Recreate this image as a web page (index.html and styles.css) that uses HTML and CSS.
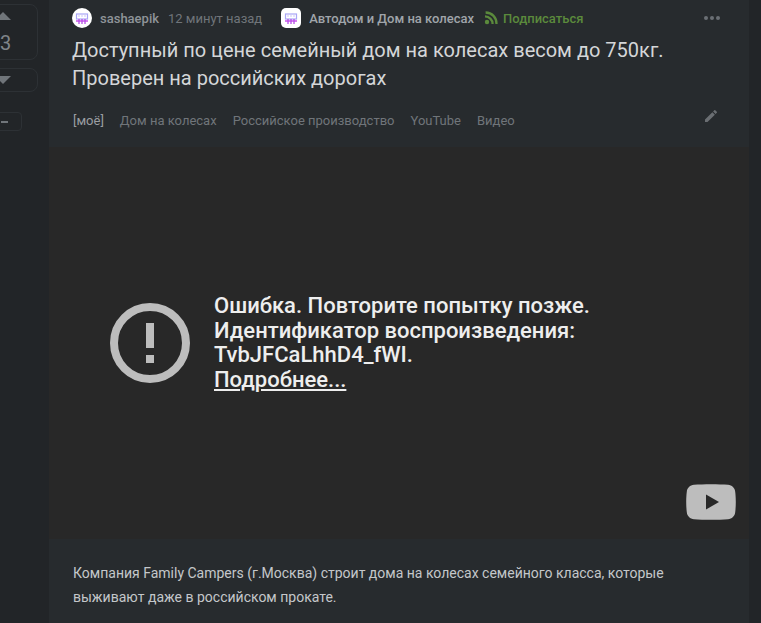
FILE: index.html
```html
<!DOCTYPE html>
<html lang="en">
<head>
    <meta charset="UTF-8">
    <title>Доступный по цене семейный дом на колесах</title>
    <link rel="stylesheet" href="styles.css">
</head>
<body>
    <div class="layout">
        <aside class="rating">
            <div class="vote-box vote-top">
                <span class="arrow arrow-up"></span>
                <span class="score">3</span>
            </div>
            <div class="vote-box vote-down">
                <span class="arrow arrow-down"></span>
            </div>
            <div class="vote-box vote-hide">
                <span class="dash"></span>
            </div>
        </aside>

        <main class="story">
            <div class="meta">
                <span class="avatar round">
                    <svg viewBox="0 0 20 20" width="20" height="20"><rect x="4.500" y="6" width="11" height="5" fill="none" stroke="#a9a6f5" stroke-width="1.200"/><path d="M6 8h2M9 8h2M12 8h2" stroke="#c9c6fa" stroke-width="1.200"/><path d="M4 12h12v2H4z" fill="#d77cf0"/><path d="M7 11v5M10 11v5M13 11v5" stroke="#b44ee8" stroke-width="1.300"/></svg>
                </span>
                <span class="author">sashaepik</span>
                <span class="time">12 минут назад</span>
                <span class="avatar square">
                    <svg viewBox="0 0 20 20" width="20" height="20"><rect x="4.500" y="6" width="11" height="5" fill="none" stroke="#a9a6f5" stroke-width="1.200"/><path d="M6 8h2M9 8h2M12 8h2" stroke="#c9c6fa" stroke-width="1.200"/><path d="M4 12h12v2H4z" fill="#d77cf0"/><path d="M7 11v5M10 11v5M13 11v5" stroke="#b44ee8" stroke-width="1.300"/></svg>
                </span>
                <span class="community">Автодом и Дом на колесах</span>
                <span class="subscribe">
                    <svg viewBox="0 0 14 14" width="14" height="14"><circle cx="3" cy="11" r="2.200" fill="#5b8a3c"/><path d="M1 5.400a7.600 7.600 0 0 1 7.600 7.600M1.600 1.500a10.900 10.900 0 0 1 10.900 11.500" fill="none" stroke="#5b8a3c" stroke-width="2.300"/></svg>
                    Подписаться
                </span>
                <span class="more"><i></i><i></i><i></i></span>
            </div>

            <h1 class="title">Доступный по цене семейный дом на колесах весом до 750кг. Проверен на российских дорогах</h1>

            <div class="tags">
                <a class="tag tag-mine">[моё]</a>
                <a class="tag">Дом на колесах</a>
                <a class="tag">Российское производство</a>
                <a class="tag">YouTube</a>
                <a class="tag">Видео</a>
                <svg class="edit" viewBox="0 0 24 24" width="16" height="16"><path d="M3 17.250V21h3.750L17.810 9.940l-3.750-3.750L3 17.250zM20.710 7.040a1 1 0 0 0 0-1.410l-2.340-2.340a1 1 0 0 0-1.410 0l-1.830 1.830 3.750 3.750 1.830-1.830z" fill="#6a6e72"/></svg>
            </div>

            <div class="video">
                <svg class="error-icon" viewBox="0 0 80 80" width="80" height="80"><circle cx="40" cy="40" r="36" fill="none" stroke="#bdbdbd" stroke-width="8"/><rect x="36" y="20" width="8" height="25" fill="#bdbdbd"/><rect x="36" y="52" width="8" height="8" fill="#bdbdbd"/></svg>
                <div class="error-text">
                    Ошибка. Повторите попытку позже.<br>
                    Идентификатор воспроизведения:<br>
                    TvbJFCaLhhD4_fWI.<br>
                    <a class="error-link">Подробнее...</a>
                </div>
                <svg class="yt-logo" viewBox="0 0 50 36" width="50" height="36"><path d="M8 .8C17 0 33 0 42 .8c4 .4 6.800 3 7.200 7 .8 6 .8 14.400 0 20.400-.4 4-3.200 6.600-7.200 7-9 .8-25 .8-34 0-4-.4-6.800-3-7.200-7-.8-6-.8-14.400 0-20.400.4-4 3.200-6.600 7.200-7z" fill="#bdbdbd"/><path d="M20 10.500L33 18 20 25.500z" fill="#282828"/></svg>
            </div>

            <p class="story-text">Компания Family Campers (г.Москва) строит дома на колесах семейного класса, которые выживают даже в российском прокате.</p>
        </main>
    </div>
</body>
</html>
```

FILE: styles.css
```css
/* General Styles */
html, body {
    height: 100%;
}

body {
    margin: 0;
    background: #222528;
    color: #d4d6d8;
    font-family: Roboto, "Noto Sans", sans-serif;
    overflow: hidden;
}

.layout {
    display: flex;
    width: 761px;
    height: 623px;
}

/* Rating column */
.rating {
    width: 49px;
    flex-shrink: 0;
    padding-top: 4px;
    overflow: hidden;
}

.vote-box {
    box-sizing: border-box;
    margin-left: -20px;
    width: 58px;
    border: 1px solid #2d3135;
    border-radius: 8px;
    display: flex;
    flex-direction: column;
    align-items: center;
}

.vote-top {
    height: 56px;
    padding-top: 7px;
}

.vote-down {
    height: 24px;
    margin-top: 8px;
    padding-top: 7px;
}

.vote-hide {
    height: 19px;
    width: 42px;
    margin-top: 20px;
    justify-content: center;
    border-radius: 4px;
}

.arrow {
    width: 0;
    height: 0;
    border-left: 8px solid transparent;
    border-right: 8px solid transparent;
    margin-left: -12px;
}

.arrow-up {
    border-bottom: 8px solid #70757a;
}

.arrow-down {
    border-top: 8px solid #70757a;
}

.score {
    margin-top: 11px;
    margin-left: -7px;
    font-size: 20px;
    line-height: 24px;
    color: #80858a;
}

.dash {
    width: 7px;
    height: 2px;
    background: #70757a;
    margin-left: 7px;
}

/* Story card */
.story {
    width: 700px;
    flex-shrink: 0;
    background: #272b2e;
}

.meta {
    display: flex;
    align-items: center;
    height: 20px;
    padding: 8px 23px 0 23px;
    font-size: 13px;
}

.avatar {
    width: 20px;
    height: 20px;
    background: #fff;
    flex-shrink: 0;
}

.avatar svg {
    display: block;
}

.round {
    border-radius: 50%;
}

.square {
    border-radius: 5px;
    margin-left: 19px;
}

.author {
    margin-left: 8px;
    font-weight: 500;
    color: #8f9499;
}

.time {
    margin-left: 9px;
    color: #70757a;
}

.community {
    margin-left: 8px;
    font-weight: 500;
    color: #a0a5aa;
}

.subscribe {
    display: flex;
    align-items: center;
    gap: 5px;
    margin-left: 10px;
    font-weight: 500;
    color: #5b8a3c;
}

.more {
    display: flex;
    gap: 2px;
    margin-left: auto;
    margin-right: 6px;
}

.more i {
    width: 4px;
    height: 4px;
    border-radius: 50%;
    background: #6a6f74;
}

.title {
    margin: 8px 23px 0;
    font-size: 20px;
    font-weight: 400;
    line-height: 28px;
    color: #d4d6d8;
}

.tags {
    display: flex;
    align-items: center;
    gap: 16px;
    height: 20px;
    margin-top: 18px;
    padding: 0 30px 0 24px;
    font-size: 13px;
}

.tag {
    color: #70757a;
}

.tag-mine {
    color: #9a9ea2;
}

.edit {
    margin-left: auto;
    margin-top: -8px;
}

/* Player */
.video {
    position: relative;
    display: flex;
    align-items: center;
    gap: 24px;
    height: 392px;
    margin-top: 17px;
    padding-left: 61px;
    box-sizing: border-box;
    background: #282828;
}

.error-icon {
    flex-shrink: 0;
}

.error-text {
    font-size: 22px;
    font-weight: 500;
    line-height: 24.500px;
    color: #eee;
}

.error-link {
    text-decoration: underline;
}

.yt-logo {
    position: absolute;
    right: 13px;
    bottom: 19px;
}

.story-text {
    margin: 22px 24px 0;
    font-size: 14px;
    line-height: 24px;
    color: #c4c7ca;
}
```
